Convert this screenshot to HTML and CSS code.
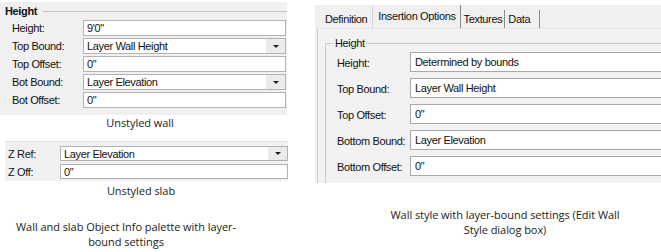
FILE: index.html
```html
<!DOCTYPE html>
<html>
<head>
<meta charset="utf-8">
<link rel="stylesheet" href="styles.css">
</head>
<body>
<div class="page">
  <div class="left">
    <div class="oip wall">
      <div class="oip-head"><span class="oip-title">Height</span><span class="oip-rule"></span></div>
      <div class="oip-rows">
        <div class="oip-row"><span class="oip-label">Height:</span><span class="field">9'0"</span></div>
        <div class="oip-row"><span class="oip-label">Top Bound:</span><span class="field select">Layer Wall Height<span class="drop"><span class="tri"></span></span></span></div>
        <div class="oip-row"><span class="oip-label">Top Offset:</span><span class="field">0"</span></div>
        <div class="oip-row"><span class="oip-label">Bot Bound:</span><span class="field select">Layer Elevation<span class="drop"><span class="tri"></span></span></span></div>
        <div class="oip-row"><span class="oip-label">Bot Offset:</span><span class="field">0"</span></div>
      </div>
    </div>
    <div class="caption cap-wall">Unstyled wall</div>
    <div class="oip slab">
      <div class="oip-rows slab-rows">
        <div class="oip-row slab-row"><span class="oip-label slab-label">Z Ref:</span><span class="field select">Layer Elevation<span class="drop"><span class="tri"></span></span></span></div>
        <div class="oip-row slab-row"><span class="oip-label slab-label">Z Off:</span><span class="field">0"</span></div>
      </div>
    </div>
    <div class="caption cap-slab">Unstyled slab</div>
    <div class="caption caption-2 cap-left">Wall and slab Object Info palette with layer-<br>bound settings</div>
  </div>
  <div class="right">
    <div class="dialog">
      <div class="tabs">
        <span class="tab tab-def">Definition</span>
        <span class="tab tab-active">Insertion Options</span>
        <span class="tab tab-sep">Textures</span>
        <span class="tab tab-sep tab-data">Data</span>
      </div>
      <div class="pane">
        <fieldset class="group">
          <legend class="legend">Height</legend>
          <div class="d-row"><span class="d-label">Height:</span><span class="d-field">Determined by bounds</span></div>
          <div class="d-row"><span class="d-label">Top Bound:</span><span class="d-field">Layer Wall Height</span></div>
          <div class="d-row"><span class="d-label">Top Offset:</span><span class="d-field">0"</span></div>
          <div class="d-row"><span class="d-label">Bottom Bound:</span><span class="d-field">Layer Elevation</span></div>
          <div class="d-row"><span class="d-label">Bottom Offset:</span><span class="d-field">0"</span></div>
        </fieldset>
      </div>
    </div>
    <div class="caption caption-2 cap-right">Wall style with layer-bound settings (Edit Wall<br>Style dialog box)</div>
  </div>
</div>
</body>
</html>
```

FILE: styles.css
```css
html, body {
  margin: 0;
  padding: 0;
  background: #ffffff;
}
body {
  width: 661px;
  height: 252px;
  overflow: hidden;
  font-family: "Liberation Sans", Arial, sans-serif;
  font-size: 11px;
  letter-spacing: -0.35px;
  color: #111;
}
.page {
  display: flex;
  align-items: flex-start;
}
.left {
  width: 300px;
  flex: none;
  display: flex;
  flex-direction: column;
}
.oip {
  background: #f0f0f0;
}
.wall {
  width: 287px;
  margin-top: 2px;
  padding-bottom: 7px;
}
.oip-head {
  height: 18px;
  display: flex;
  align-items: center;
  padding-left: 5px;
}
.oip-title {
  font-weight: bold;
  font-size: 11px;
}
.oip-rule {
  flex: 1;
  height: 1px;
  background: #c4c4c4;
  margin-left: 6px;
}
.oip-rows {
  display: flex;
  flex-direction: column;
  gap: 2px;
}
.oip-row {
  display: flex;
  height: 16px;
  align-items: stretch;
}
.oip-label {
  width: 71px;
  padding-left: 12px;
  display: flex;
  align-items: center;
  flex: none;
}
.field {
  flex: 1;
  margin-right: 1px;
  background: #fff;
  border: 1px solid #b2b2b2;
  display: flex;
  align-items: center;
  padding-left: 3px;
  position: relative;
  overflow: hidden;
  white-space: nowrap;
}
.select {
  padding-right: 0;
}
.drop {
  margin-left: auto;
  width: 19px;
  align-self: stretch;
  background: #ebebeb;
  display: flex;
  align-items: center;
  justify-content: center;
}
.tri {
  width: 0;
  height: 0;
  border-left: 3px solid transparent;
  border-right: 3px solid transparent;
  border-top: 3px solid #222;
}
.caption {
  font-family: "Open Sans", "Noto Sans", sans-serif;
  font-size: 11px;
  letter-spacing: -0.05px;
  color: #222;
  text-align: center;
  line-height: 13px;
}
.caption-2 {
  line-height: 15px;
}
.cap-wall {
  width: 280px;
  margin-top: 1px;
}
.slab {
  margin-left: 5px;
  width: 283px;
  margin-top: 12px;
  padding-top: 4px;
  padding-bottom: 2px;
  border-top: 1px solid #e2e2e2;
}
.slab-row {
  height: 15px;
}
.slab-rows {
  gap: 3px;
}
.slab-label {
  width: 52px;
  padding-left: 3px;
}
.slab .field {
  margin-right: 0;
}
.cap-slab {
  width: 282px;
  margin-top: 3px;
}
.cap-left {
  width: 252px;
  margin-top: 22px;
}
.right {
  width: 346px;
  margin-left: 15px;
  flex: none;
}
.dialog {
  margin-top: 5px;
  height: 178px;
  background: #f0f0f0;
  overflow: hidden;
  display: flex;
  flex-direction: column;
}
.tabs {
  height: 23px;
  display: flex;
  align-items: flex-end;
  padding-left: 5px;
  flex: none;
}
.tab {
  height: 18px;
  display: flex;
  align-items: center;
  padding: 0 4px 0 5px;
  font-size: 11px;
  color: #111;
}
.tab-def {
  padding-right: 5px;
}
.tab-active {
  height: 21px;
  border-left: 1px solid #d4d4d4;
  border-top: 1px solid #d4d4d4;
  border-right: 1px solid #8a8a8a;
  background: #f0f0f0;
  padding-bottom: 3px;
  margin-bottom: -1px;
}
.tab-sep {
  border-right: 1px solid #8a8a8a;
  padding: 0 2px 0 3px;
}
.tab-data {
  padding-right: 9px;
}
.pane {
  flex: 1;
  margin-left: 2px;
  border-left: 1px solid #d0d0d0;
  border-top: 1px solid #e4e4e4;
  background: #f2f2f2;
  padding-left: 7px;
}
.group {
  margin: 8px 0 0 0;
  padding: 2px 0 0 11px;
  border: 1px solid #c9c9c9;
  border-right: none;
  border-bottom: none;
  height: 200px;
  min-width: 0;
}
.legend {
  padding: 0 1px;
  margin-left: -3px;
  font-size: 11px;
  line-height: 13px;
}
.d-row {
  display: flex;
  height: 20px;
  margin-bottom: 6px;
}
.d-label {
  width: 73px;
  flex: none;
  display: flex;
  align-items: center;
  padding-top: 2px;
}
.d-field {
  flex: 1;
  background: #fff;
  border: 1px solid #a8a8a8;
  border-right: none;
  display: flex;
  align-items: center;
  padding-left: 4px;
  white-space: nowrap;
}
.cap-right {
  margin-top: 24px;
  padding-left: 34px;
}
```
